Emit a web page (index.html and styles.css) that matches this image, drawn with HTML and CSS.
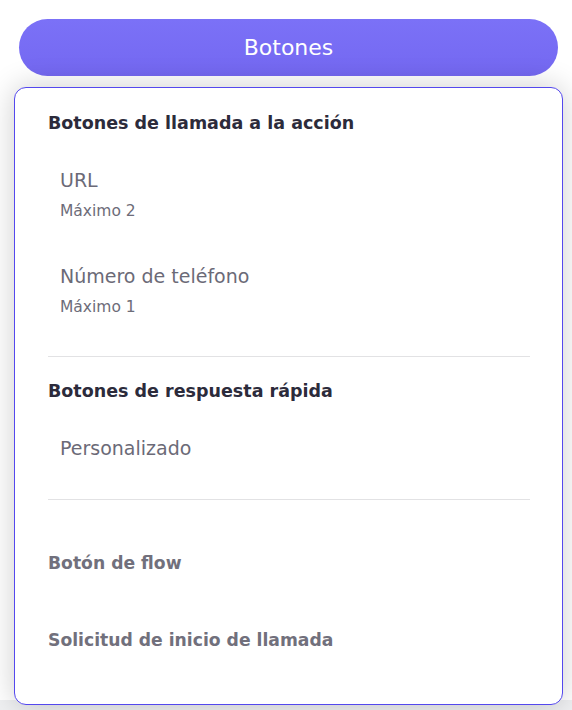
FILE: index.html
```html
<!DOCTYPE html>
<html>
<head>
    <title>Botones</title>
    <link rel="stylesheet" href="styles.css">
</head>
<body>
    <div class="page">
        <button class="toggle">Botones</button>

        <div class="menu">
            <div class="group">
                <h3 class="group-title">Botones de llamada a la acción</h3>
                <div class="options">
                    <div class="option">
                        <span class="option-name">URL</span>
                        <span class="option-limit">Máximo 2</span>
                    </div>
                    <div class="option">
                        <span class="option-name">Número de teléfono</span>
                        <span class="option-limit">Máximo 1</span>
                    </div>
                </div>
            </div>

            <div class="group">
                <h3 class="group-title">Botones de respuesta rápida</h3>
                <div class="options">
                    <div class="option">
                        <span class="option-name">Personalizado</span>
                    </div>
                </div>
            </div>

            <div class="singles">
                <div class="single">Botón de flow</div>
                <div class="single">Solicitud de inicio de llamada</div>
            </div>
        </div>
    </div>
    <div class="strip"></div>
</body>
</html>
```

FILE: styles.css
```css
body {
    margin: 0;
    font-family: "DejaVu Sans", Inter, sans-serif;
    background-color: #fff;
}
.page {
    padding: 19px 9px 0 14px;
}
.toggle {
    display: block;
    width: calc(100% - 10px);
    margin: 0 5px;
    height: 57px;
    border: none;
    border-radius: 29px;
    background: linear-gradient(#7b71f7, #7468f1);
    color: #fff;
    font-family: inherit;
    font-size: 22px;
    font-weight: 400;
    cursor: pointer;
}
.menu {
    position: relative;
    z-index: 1;
    margin-top: 11px;
    margin-bottom: -5px;
    padding: 23px 32px 52px 33px;
    border: 1px solid #5448ee;
    border-radius: 12px;
    background-color: #fff;
    box-shadow: 0 0 30px rgba(0, 0, 0, 0.2);
}
.group {
    border-bottom: 1px solid #e2e2e4;
    padding-bottom: 39px;
    margin-bottom: 22px;
}
.group-title {
    margin: 0 0 33px;
    font-size: 17.5px;
    line-height: 24px;
    font-weight: 700;
    color: #2c2b3b;
}
.options {
    display: flex;
    flex-direction: column;
    gap: 43px;
    padding: 0 12px;
}
.option {
    display: flex;
    flex-direction: column;
    gap: 9px;
}
.option-name {
    font-size: 19px;
    line-height: 24px;
    color: #6b6a77;
}
.option-limit {
    font-size: 15.5px;
    line-height: 20px;
    color: #6d6c79;
}
.singles {
    display: flex;
    flex-direction: column;
    gap: 53px;
    padding-top: 29px;
}
.single {
    font-size: 17.2px;
    line-height: 24px;
    font-weight: 700;
    color: #71707c;
}
.strip {
    height: 20px;
    background-color: #eff0f2;
}
```
